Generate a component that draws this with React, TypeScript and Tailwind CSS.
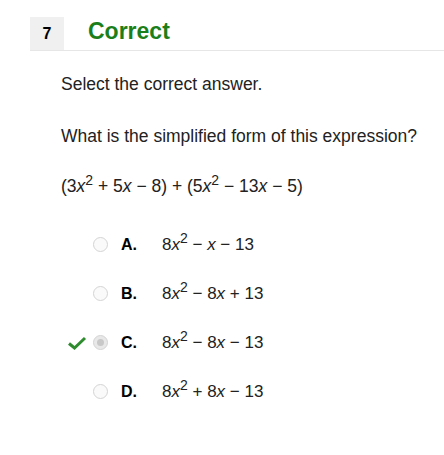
const options = [
  { letter: "A.", expr: ["8", "x", "2", " − ", "x", " − 13"], selected: false },
  { letter: "B.", expr: ["8", "x", "2", " − 8", "x", " + 13"], selected: false },
  { letter: "C.", expr: ["8", "x", "2", " − 8", "x", " − 13"], selected: true },
  { letter: "D.", expr: ["8", "x", "2", " + 8", "x", " − 13"], selected: false },
]

function Expr({ parts }: { parts: string[] }) {
  return (
    <span>
      {parts[0]}
      <i>{parts[1]}</i>
      <sup className="text-[14px]">{parts[2]}</sup>
      {parts[3]}
      <i>{parts[4]}</i>
      {parts[5]}
    </span>
  )
}

function Option({ letter, expr, selected }: (typeof options)[number]) {
  return (
    <div className="flex h-[49px] items-center">
      <div className="flex w-[35px] justify-end pr-[6px]">
        {selected && (
          <svg width="20" height="14" viewBox="0 0 20 14">
            <path d="M2 7.5 L7.5 12 L18 2" fill="none" stroke="#2e8b2e" strokeWidth="3" />
          </svg>
        )}
      </div>
      <div
        className={
          "h-[15px] w-[15px] rounded-full border border-[#d4d4d4] " +
          (selected ? "bg-[#e8e8e8] p-[3px]" : "bg-[#fafafa]")
        }
      >
        {selected && <div className="h-full w-full rounded-full bg-[#c8c8c8]" />}
      </div>
      <span className="ml-[13px] w-[41px] text-[16px] font-bold text-black">{letter}</span>
      <span className="text-[17px] text-[#222]">
        <Expr parts={expr} />
      </span>
    </div>
  )
}

export default function App() {
  return (
    <div className="h-[455px] w-[444px] bg-white pt-[17px] font-['Liberation_Sans',Arial,sans-serif]">
      <div className="ml-[30px] flex h-[34px] items-stretch border-b border-[#e6e6e6]">
        <div className="flex w-[34px] items-center justify-center bg-[#f0f0f0] text-[16px] font-bold text-black">
          7
        </div>
        <div className="ml-[24px] flex items-center pb-[4px] text-[23px] font-bold text-[#1a7f1a]">
          Correct
        </div>
      </div>
      <div className="pl-[61px] text-[17.5px] leading-[20px] text-[#222]">
        <p className="mt-[23px]">Select the correct answer.</p>
        <p className="mt-[32px]">What is the simplified form of this expression?</p>
        <p className="mt-[30px]">
          (3<i>x</i>
          <sup className="text-[14px]">2</sup> + 5<i>x</i> − 8) + (5<i>x</i>
          <sup className="text-[14px]">2</sup> − 13<i>x</i> − 5)
        </p>
      </div>
      <div className="mt-[24px] pl-[58px]">
        {options.map((o) => (
          <Option key={o.letter} {...o} />
        ))}
      </div>
    </div>
  )
}
